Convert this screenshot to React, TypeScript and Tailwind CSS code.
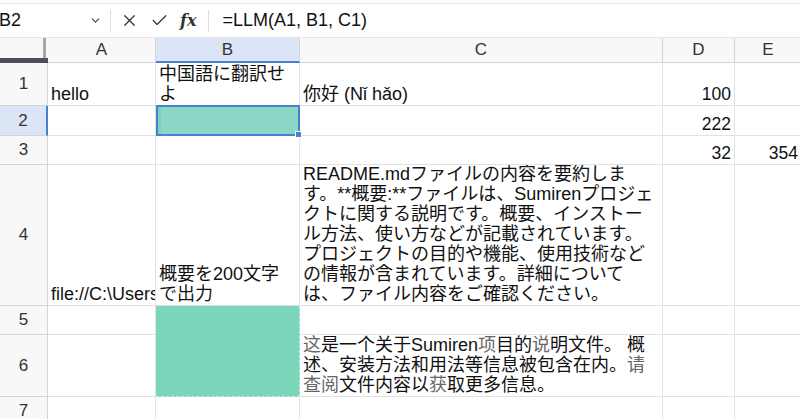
import { X, Check, ChevronDown } from "lucide-react";
import clsx from "clsx";
import type { ReactNode } from "react";

const JP = "font-['Liberation_Sans','Noto_Sans_CJK_JP',sans-serif]";
const SC = "font-['Liberation_Sans','Noto_Sans_CJK_SC',sans-serif]";

function Cell({ children, className }: { children?: ReactNode; className?: string }) {
  return (
    <div
      className={clsx(
        "flex items-end overflow-hidden border-r border-b border-[#e2e2e2] px-[3px] pb-[1px] text-[17.5px] leading-[20px] text-[#111] whitespace-nowrap",
        className
      )}
    >
      {children}
    </div>
  );
}

function RowHead({ n, active }: { n: number; active?: boolean }) {
  return (
    <div
      className={clsx(
        "flex items-center justify-center border-b border-r text-[17px] text-[#333]",
        active
          ? "bg-[#dbe5f6] border-r-2 border-r-[#4a7fd6] border-b-[#d4d4d4]"
          : "bg-[#f8f8f8] border-[#d4d4d4]"
      )}
    >
      {n}
    </div>
  );
}

function ColHead({ label, active }: { label: string; active?: boolean }) {
  return (
    <div
      className={clsx(
        "flex items-center justify-center border-r text-[17px] text-[#333]",
        active
          ? "bg-[#dbe5f6] border-b-2 border-b-[#4a7fd6] border-r-[#d4d4d4]"
          : "bg-[#f8f8f8] border-b border-[#d4d4d4]"
      )}
    >
      {label}
    </div>
  );
}

const gray = "text-[#666]";

export default function App() {
  return (
    <div className={clsx("w-[800px] h-[419px] overflow-hidden bg-white", JP)}>
      {/* formula bar */}
      <div className="h-[3px]" />
      <div className="flex h-[35px] items-center border-t border-b border-[#e6e6e6] text-[18px] text-[#111]">
        <div className="flex w-[110px] items-center justify-between pl-0 pr-[8px]">
          <span className="-ml-[1px]">B2</span>
          <ChevronDown size={13} strokeWidth={2} className="text-[#444]" />
        </div>
        <div className="h-[22px] w-px bg-[#dcdcdc]" />
        <div className="flex items-center gap-[11px] pl-[9px] pr-[12px] text-[#333]">
          <X size={19} strokeWidth={1.5} />
          <Check size={19} strokeWidth={1.5} />
          <span className="font-['DejaVu_Serif',serif] text-[16px] font-semibold italic">fx</span>
        </div>
        <div className="h-[22px] w-px bg-[#dcdcdc]" />
        <span className="pl-[13px] font-['Liberation_Sans',sans-serif]">=LLM(A1, B1, C1)</span>
      </div>

      {/* sheet */}
      <div className="grid grid-cols-[48px_108px_144px_363px_72px_67px] grid-rows-[25px_43px_30px_29px_141px_29px_62px_30px]">
        {/* header */}
        <div className="flex justify-end border-b-[5px] border-b-[#4b5057] bg-[#f8f8f8]">
          <div className="mr-[2px] w-[3px] bg-[#a8a8a8]" />
        </div>
        <ColHead label="A" />
        <ColHead label="B" active />
        <ColHead label="C" />
        <ColHead label="D" />
        <ColHead label="E" />

        {/* row 1 */}
        <RowHead n={1} />
        <Cell className="text-[18px]">hello</Cell>
        <Cell className="text-[18px]">
          <div>
            <div>中国語に翻訳せ</div>
            <div>よ</div>
          </div>
        </Cell>
        <Cell className={clsx(SC, "text-[18px]")}>你好 (Nǐ hǎo)</Cell>
        <Cell className="justify-end">100</Cell>
        <Cell />

        {/* row 2 */}
        <RowHead n={2} active />
        <Cell />
        <div className="relative -mt-px border-2 border-[#4a7fd6] bg-[#8bd6c5]">
          <div className="h-full w-[3px] bg-[#78d6b8]" />
          <div className="absolute -bottom-[4px] -right-[4px] h-[7px] w-[7px] border border-white bg-[#4a7fd6]" />
        </div>
        <Cell />
        <Cell className="justify-end">222</Cell>
        <Cell />

        {/* row 3 */}
        <RowHead n={3} />
        <Cell />
        <Cell />
        <Cell />
        <Cell className="justify-end">32</Cell>
        <Cell className="justify-end">354</Cell>

        {/* row 4 */}
        <RowHead n={4} />
        <Cell className="text-[18px]">file://C:\Users</Cell>
        <Cell className="text-[18px]">
          <div>
            <div>概要を200文字</div>
            <div>で出力</div>
          </div>
        </Cell>
        <Cell className="text-[18px]">
          <div>
            <div>README.mdファイルの内容を要約しま</div>
            <div>す。**概要:**ファイルは、Sumirenプロジェ</div>
            <div>クトに関する説明です。概要、インストー</div>
            <div>ル方法、使い方などが記載されています。</div>
            <div>プロジェクトの目的や機能、使用技術など</div>
            <div>の情報が含まれています。詳細について</div>
            <div>は、ファイル内容をご確認ください。</div>
          </div>
        </Cell>
        <Cell />
        <Cell />

        {/* row 5 */}
        <RowHead n={5} />
        <Cell />
        <div className="row-span-2 border-r border-b border-dashed border-[#cfe9e1] bg-[#7bd6bb]" />
        <Cell />
        <Cell />
        <Cell />

        {/* row 6 */}
        <RowHead n={6} />
        <Cell />
        <Cell className={clsx(SC, "text-[18px]")}>
          <div>
            <div>
              <span className={gray}>这</span>是一个关于Sumiren<span className={gray}>项</span>目的
              <span className={gray}>说</span>明文件。 概
            </div>
            <div>
              述、安装方法和用法等信息被包含在内。<span className={gray}>请</span>
            </div>
            <div>
              <span className={gray}>查阅</span>文件内容以<span className={gray}>获</span>取更多信息。
            </div>
          </div>
        </Cell>
        <Cell />
        <Cell />

        {/* row 7 */}
        <div className="flex items-start justify-center border-r border-[#d4d4d4] bg-[#f8f8f8] pt-[1px] text-[17px] text-[#333]">
          7
        </div>
        <Cell />
        <Cell />
        <Cell />
        <Cell />
        <Cell />
      </div>
    </div>
  );
}
